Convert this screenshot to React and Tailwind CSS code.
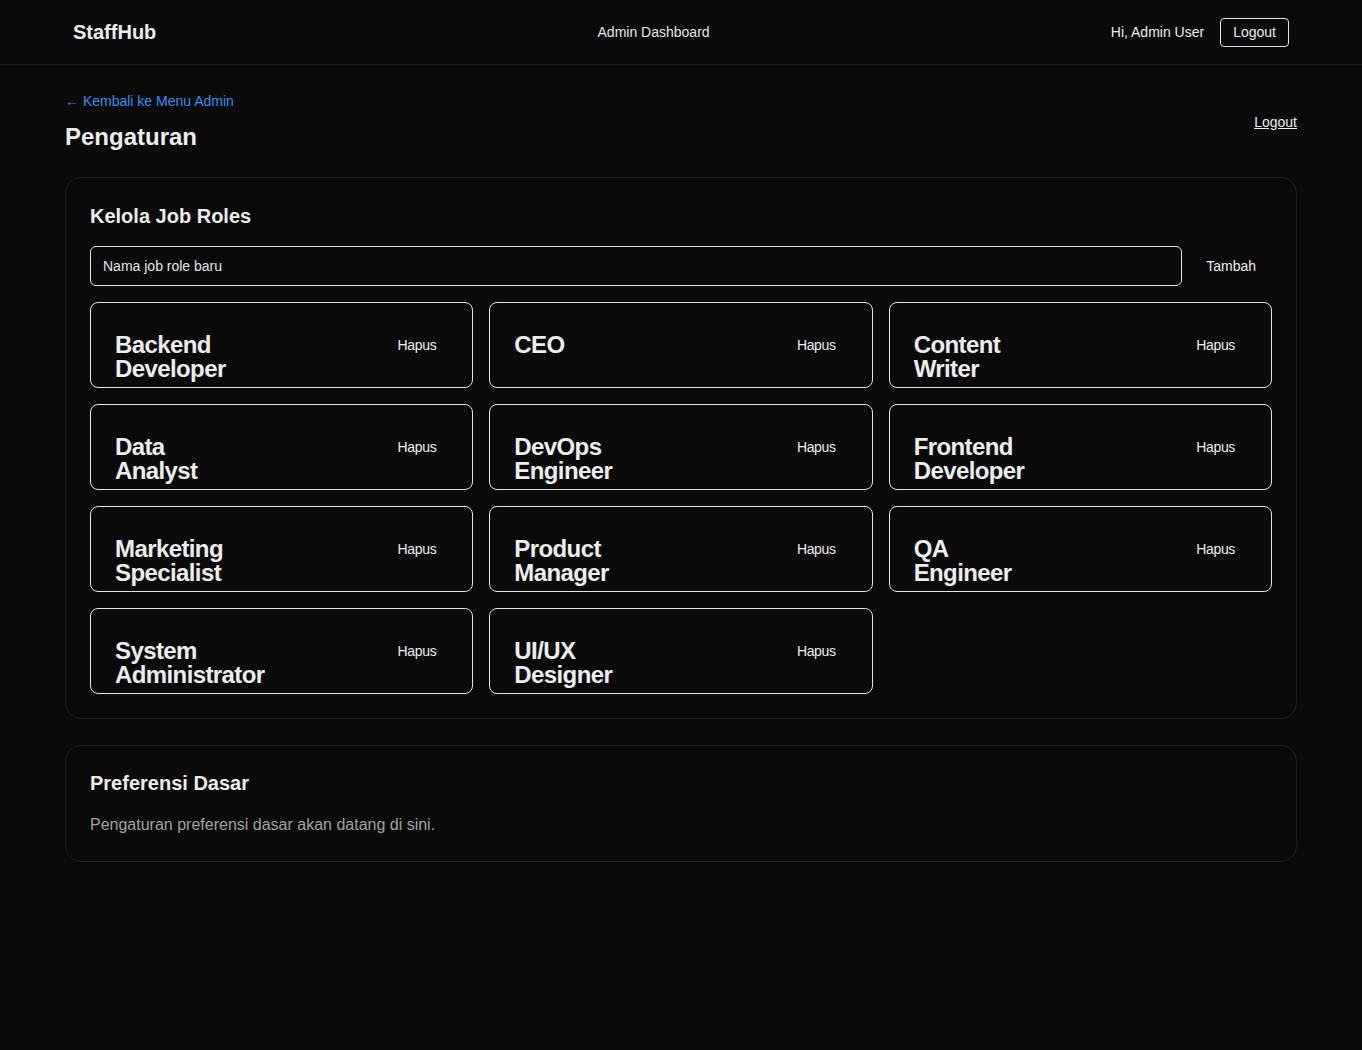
import React from 'react';

const roles = [
    'Backend Developer',
    'CEO',
    'Content Writer',
    'Data Analyst',
    'DevOps Engineer',
    'Frontend Developer',
    'Marketing Specialist',
    'Product Manager',
    'QA Engineer',
    'System Administrator',
    'UI/UX Designer',
];

const Header = () => (
    <header className="border-b border-[#222222]">
        <div className="max-w-7xl mx-auto px-8 h-16 flex items-center justify-between">
            <span className="text-xl font-bold text-[#ededed]">StaffHub</span>
            <span className="ml-10 text-sm text-[#e5e5e5]">Admin Dashboard</span>
            <div className="flex items-center gap-4">
                <span className="text-sm text-[#ededed]">Hi, Admin User</span>
                <button className="h-[29px] px-3 text-sm text-[#ededed] border border-[#e5e5e5] rounded-[4px]">
                    Logout
                </button>
            </div>
        </div>
    </header>
);

const RoleCard = ({ name }) => (
    <div className="h-[86px] flex items-center justify-between px-6 border border-[#e5e5e5] rounded-lg">
        <div className="h-6 w-min text-2xl leading-6 font-bold tracking-tight text-[#ededed]">{name}</div>
        <button className="pl-2.5 pr-3 text-sm tracking-tight text-[#ededed]">Hapus</button>
    </div>
);

export default function App() {
    return (
        <div className="min-h-[1050px] bg-[#0a0a0a] text-[#ededed]" style={{ fontFamily: '"Liberation Sans", Arial, sans-serif' }}>
            <Header />
            <main className="max-w-7xl mx-auto px-6 pt-[26px] pb-10">
                <div className="flex items-center justify-between mb-6">
                    <div>
                        <a className="block text-sm text-[#3b8cf0] mb-[10px]">← Kembali ke Menu Admin</a>
                        <h1 className="text-2xl font-bold">Pengaturan</h1>
                    </div>
                    <button className="text-sm underline text-[#ededed]">Logout</button>
                </div>

                <section className="border border-[#222222] rounded-2xl p-6">
                    <h2 className="text-xl font-semibold mb-4">Kelola Job Roles</h2>
                    <div className="flex gap-2 mb-4">
                        <input
                            className="flex-1 h-10 px-3 text-sm bg-transparent border border-[#e5e5e5] rounded-md placeholder:text-[#e5e5e5] outline-none"
                            placeholder="Nama job role baru"
                        />
                        <button className="px-4 text-sm text-[#ededed]">Tambah</button>
                    </div>
                    <div className="grid grid-cols-3 gap-4">
                        {roles.map((r) => (
                            <RoleCard key={r} name={r} />
                        ))}
                    </div>
                </section>

                <section className="mt-[26px] border border-[#222222] rounded-2xl px-6 pt-[23px] pb-6">
                    <h2 className="text-xl font-semibold mb-4">Preferensi Dasar</h2>
                    <p className="text-base text-[#a1a1a1]">Pengaturan preferensi dasar akan datang di sini.</p>
                </section>
            </main>
        </div>
    );
}
